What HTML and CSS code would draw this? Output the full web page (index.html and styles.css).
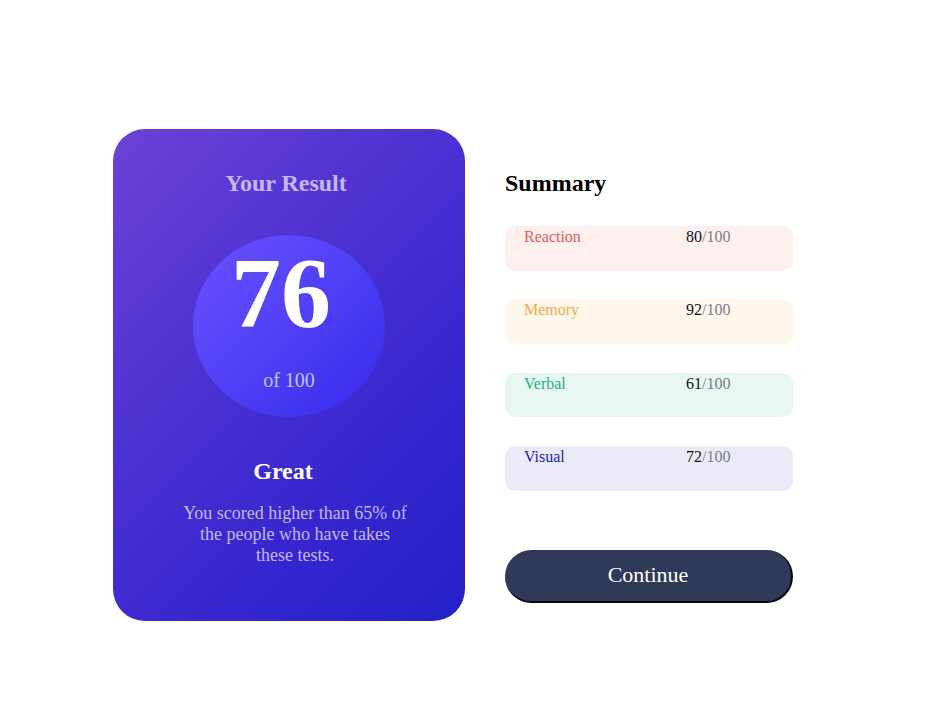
FILE: index.html
```html
<!DOCTYPE html>
<html lang="en">
<head>
<meta charset="utf-8">
<title>Results summary</title>
<link rel="stylesheet" href="styles.css">
</head>
<body>
<main class="page">
  <section class="result">
    <h2 class="result-title">Your Result</h2>
    <div class="score-circle">
      <span class="score-value">76</span>
      <span class="score-of">of 100</span>
    </div>
    <h3 class="result-rank">Great</h3>
    <p class="result-text">You scored higher than 65% of the people who have takes these tests.</p>
  </section>
  <section class="summary">
    <h2 class="summary-title">Summary</h2>
    <ul class="summary-list">
      <li class="item item-reaction"><span class="item-label">Reaction</span><span class="item-score"><b>80</b><span class="item-max">/100</span></span></li>
      <li class="item item-memory"><span class="item-label">Memory</span><span class="item-score"><b>92</b><span class="item-max">/100</span></span></li>
      <li class="item item-verbal"><span class="item-label">Verbal</span><span class="item-score"><b>61</b><span class="item-max">/100</span></span></li>
      <li class="item item-visual"><span class="item-label">Visual</span><span class="item-score"><b>72</b><span class="item-max">/100</span></span></li>
    </ul>
    <button class="continue" type="button">Continue</button>
  </section>
</main>
</body>
</html>
```
FILE: styles.css
```css
* { box-sizing: border-box; }
html, body { margin: 0; padding: 0; background: #fff; }
body { font-family: "Liberation Serif", "Times New Roman", serif; color: #000; }

.page {
  display: flex;
  align-items: flex-start;
  gap: 40px;
  padding: 129px 0 0 113px;
}

.result {
  width: 352px;
  height: 492px;
  border-radius: 32px;
  background: linear-gradient(135deg, #6b43d6 0%, #4c31d2 40%, #3626cf 70%, #2420c8 100%);
  display: flex;
  flex-direction: column;
  align-items: center;
  padding-top: 40px;
}

.result-title {
  margin: 0 6px 0 0;
  font-size: 24px;
  font-weight: bold;
  color: #c4b8f0;
  line-height: 28px;
}

.score-circle {
  margin-top: 38px;
  width: 192px;
  height: 182px;
  border-radius: 50%;
  background: linear-gradient(135deg, #6b50fe 0%, #5040f6 50%, #3629ea 100%);
  display: flex;
  flex-direction: column;
  align-items: center;
}

.score-value {
  margin: 4px 16px 0 0;
  font-size: 100px;
  font-weight: bold;
  color: #fff;
  line-height: 108px;
}

.score-of {
  margin-top: 22px;
  font-size: 20px;
  color: #c8c0f4;
  line-height: 22px;
}

.result-rank {
  margin: 40px 12px 0 0;
  font-size: 24px;
  font-weight: bold;
  color: #fff;
  line-height: 28px;
}

.result-text {
  margin: 18px 0 0 12px;
  width: 228px;
  text-align: center;
  font-size: 18px;
  line-height: 21px;
  color: #c3b9f2;
}

.summary {
  width: 288px;
  padding-top: 40px;
  display: flex;
  flex-direction: column;
}

.summary-title {
  margin: 0;
  font-size: 24px;
  font-weight: bold;
  line-height: 28px;
  color: #000;
}

.summary-list {
  list-style: none;
  margin: 29px 0 0;
  padding: 0;
  display: flex;
  flex-direction: column;
  gap: 28.6px;
}

.item {
  height: 44.7px;
  border-radius: 10px;
  display: grid;
  grid-template-columns: 162px auto;
  align-items: start;
  padding: 2px 0 0 19px;
  font-size: 16px;
  line-height: 18px;
}

.item-score b { font-weight: normal; color: #111; }
.item-max { color: #7c7c85; }

.item-reaction { background: #fff0f0; }
.item-reaction .item-label { color: #ea5b5c; }
.item-memory { background: #fff7eb; }
.item-memory .item-label { color: #f5ad44; }
.item-verbal { background: #e8f7f2; }
.item-verbal .item-label { color: #1ab187; }
.item-visual { background: #ebebf8; }
.item-visual .item-label { color: #1f23b3; }

.continue {
  margin-top: 59.4px;
  width: 288px;
  height: 53px;
  border-radius: 27px;
  border: 0;
  border-right: 2px solid #05070d;
  border-bottom: 2px solid #05070d;
  background: #2f3a58;
  color: #fff;
  font-family: "Liberation Serif", "Times New Roman", serif;
  font-size: 22px;
  padding: 0;
}
```
